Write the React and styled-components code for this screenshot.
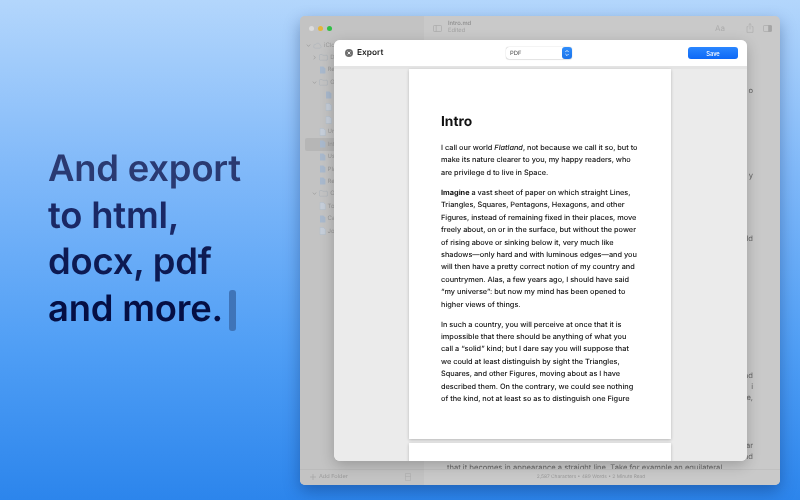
import React from 'react'
import styled, { createGlobalStyle } from 'styled-components'

const Global = createGlobalStyle`
  html, body { margin: 0; padding: 0; }
  body { font-family: Inter, "Liberation Sans", sans-serif; text-rendering: geometricPrecision; }
`

const Page = styled.div`
  width: 800px;
  height: 500px;
  overflow: hidden;
  display: flex;
  filter: blur(0.25px);
  background: linear-gradient(180deg, #b3d6fc 0%, #7fb8f9 35%, #4f9ef5 70%, #2c85ec 100%);
`

const Hero = styled.section`
  width: 300px;
  flex: none;
  box-sizing: border-box;
  padding: 145px 0 0 48px;
`

const HeroLine = styled.div`
  font-size: 36.4px;
  line-height: 46.5px;
  font-weight: 600;
  letter-spacing: -0.2px;
  white-space: nowrap;
  display: flex;
  align-items: center;
  color: ${({ $color }) => $color};
`

const Caret = styled.span`
  display: inline-block;
  width: 7px;
  height: 41px;
  margin: 5px 0 0 6px;
  border-radius: 3px;
  background: #3f74b8;
`

const Win = styled.div`
  position: relative;
  flex: none;
  width: 480px;
  height: 469px;
  margin-top: 16px;
  border-radius: 5px;
  overflow: hidden;
  display: flex;
  background: #c9c9c9;
  box-shadow: 0 6px 16px rgba(0, 30, 80, 0.35);
  color: #777;
`

const Sidebar = styled.aside`
  width: 124px;
  flex: none;
  display: flex;
  flex-direction: column;
  background: #c3c3c3;
`

const Lights = styled.div`
  height: 23px;
  flex: none;
  display: flex;
  align-items: center;
  gap: 4px;
  padding: 1px 0 0 8.5px;
  box-sizing: border-box;
`

const Light = styled.i`
  width: 5px;
  height: 5px;
  border-radius: 50%;
  background: ${({ $c }) => $c};
`

const Tree = styled.div`
  flex: 1;
  display: flex;
  flex-direction: column;
`

const Row = styled.div`
  height: 12.4px;
  flex: none;
  display: flex;
  align-items: center;
  gap: 2px;
  margin: 0 0 0 5px;
  padding-left: ${({ $depth }) => 1 + $depth * 6.3}px;
  border-radius: 2px;
  font-size: 6px;
  color: #999;
  background: ${({ $on }) => ($on ? '#b6b6b6' : 'transparent')};
  white-space: nowrap;
`

const Chev = styled.span`
  width: 5px;
  flex: none;
  display: flex;
`

const SideFoot = styled.div`
  height: 16px;
  flex: none;
  box-sizing: border-box;
  display: flex;
  align-items: center;
  justify-content: space-between;
  padding: 0 13px 1px 10px;
  border-top: 1px solid #bbb;
  font-size: 5.6px;
  color: #9a9a9a;
`

const AddFolder = styled.span`
  display: flex;
  align-items: center;
  gap: 3px;
`

const Main = styled.main`
  flex: 1;
  min-width: 0;
  display: flex;
  flex-direction: column;
`

const Toolbar = styled.header`
  height: 24px;
  flex: none;
  box-sizing: border-box;
  display: flex;
  align-items: center;
  padding: 0 8px 0 9px;
  gap: 6px;
`

const TitleBlock = styled.div`
  flex: 1;
  display: flex;
  flex-direction: column;
  font-size: 5.8px;
  line-height: 6.5px;
  margin-top: -1px;
`

const Title = styled.span`
  font-weight: 500;
  color: #8c8c8c;
`

const Sub = styled.span`
  color: #a2a2a2;
`

const Aa = styled.span`
  font-size: 8px;
  color: #adadad;
  margin-right: 15px;
`

const Tools = styled.div`
  display: flex;
  align-items: center;
  gap: 9px;
`

const Editor = styled.div`
  flex: 1;
  min-height: 0;
  overflow: hidden;
  padding-top: 44.5px;
`

const EditLine = styled.div`
  height: 11px;
  margin-top: ${({ $gap }) => $gap || 0}px;
  font-size: 7.6px;
  line-height: 11px;
  white-space: nowrap;
  color: #666;
  text-align: ${({ $end }) => ($end ? 'right' : 'left')};
  width: ${({ $end }) => ($end ? '329px' : 'auto')};
  padding-left: ${({ $end }) => ($end ? '0' : '23px')};
`

const Status = styled.footer`
  height: 16px;
  flex: none;
  box-sizing: border-box;
  display: flex;
  align-items: center;
  justify-content: center;
  padding: 0 22px 1px 0;
  border-top: 1px solid #c0c0c0;
  font-size: 4.85px;
  color: #999;
  background: #c9c9c9;
`

const Sheet = styled.div`
  position: absolute;
  left: 34px;
  top: 24px;
  width: 413px;
  height: 421px;
  border-radius: 6px;
  overflow: hidden;
  display: flex;
  flex-direction: column;
  background: #ebebeb;
  box-shadow: 0 4px 14px rgba(0, 0, 0, 0.22);
`

const SheetHead = styled.div`
  height: 26px;
  flex: none;
  display: grid;
  grid-template-columns: 1fr auto 1fr;
  align-items: center;
  padding: 0 9px 0 11px;
  background: #fff;
`

const Close = styled.div`
  display: flex;
  align-items: center;
  gap: 4px;
  font-size: 8.3px;
  font-weight: 600;
  color: #222;
`

const Select = styled.div`
  width: 66px;
  height: 12px;
  margin-right: 5px;
  box-sizing: border-box;
  display: flex;
  align-items: center;
  justify-content: space-between;
  padding-left: 4px;
  border-radius: 3px;
  background: #fff;
  box-shadow: 0 0 1px rgba(0, 0, 0, 0.35), 0 0.5px 1px rgba(0, 0, 0, 0.08);
  font-size: 5.8px;
  color: #444;
`

const Stepper = styled.span`
  width: 10px;
  height: 12px;
  border-radius: 3px;
  background: linear-gradient(180deg, #2f8dfb, #1a73ea);
  display: flex;
  align-items: center;
  justify-content: center;
`

const Save = styled.button`
  justify-self: end;
  width: 50px;
  height: 12.5px;
  padding: 0;
  border: 0;
  border-radius: 3px;
  background: linear-gradient(180deg, #2a86ff, #0d68f6);
  color: #fff;
  font-family: inherit;
  font-size: 5.8px;
  font-weight: 500;
`

const Pages = styled.div`
  flex: 1;
  min-height: 0;
  overflow: hidden;
  display: flex;
  flex-direction: column;
  align-items: center;
  gap: 4px;
  padding: 3px 1px 0 0;
  background: linear-gradient(180deg, #e4e4e4 0, #e4e4e4 3px, #ebebeb 3px);
`

const Paper = styled.article`
  width: 262px;
  flex: none;
  height: ${({ $h }) => $h}px;
  box-sizing: border-box;
  overflow: hidden;
  padding: 45px 0 0 32px;
  background: #fff;
  box-shadow: 0 1px 3px rgba(0, 0, 0, 0.22);
  color: #111;
`

const H1 = styled.h1`
  margin: 0 0 12px;
  font-size: 13.8px;
  line-height: 16px;
  font-weight: 700;
  color: #111;
`

const Para = styled.p`
  margin: 0 0 7.7px;
  font-size: 7.34px;
  font-weight: 500;
  line-height: 12.4px;
  white-space: pre;
`

const paras = {
  third: `In such a country, you will perceive at once that it is
impossible that there should be anything of what you
call a “solid” kind; but I dare say you will suppose that
we could at least distinguish by sight the Triangles,
Squares, and other Figures, moving about as I have
described them. On the contrary, we could see nothing
of the kind, not at least so as to distinguish one Figure`,
  second: ` a vast sheet of paper on which straight Lines,
Triangles, Squares, Pentagons, Hexagons, and other
Figures, instead of remaining fixed in their places, move
freely about, on or in the surface, but without the power
of rising above or sinking below it, very much like
shadows—only hard and with luminous edges—and you
will then have a pretty correct notion of my country and
countrymen. Alas, a few years ago, I should have said
“my universe”: but now my mind has been opened to
higher views of things.`,
}

// rows of the blurred file tree: [depth, kind, open, label, selected, pale]
const tree = [
  [0, 'cloud', 'down', 'iCloud'],
  [1, 'folder', 'right', 'Drafts'],
  [2, 'doc', null, 'Read'],
  [1, 'folder', 'down', 'Geometry'],
  [3, 'doc', null, 'Lines'],
  [3, 'doc', null, 'Points', false, true],
  [3, 'doc', null, 'Solids', false, true],
  [2, 'doc', null, 'Untitled', false, true],
  [2, 'doc', null, 'Intro', true],
  [2, 'doc', null, 'Use'],
  [2, 'doc', null, 'Plans'],
  [2, 'doc', null, 'Rest'],
  [1, 'folder', 'down', 'Other'],
  [2, 'doc', null, 'To do', false, true],
  [2, 'doc', null, 'Call'],
  [2, 'doc', null, 'Jot', false, true],
]

// editor text behind the sheet, only the line ends show past its right edge
const lineEnds = [
  ['o', 0],
  ['y', 74],
  ['ld', 52],
  ['nd', 126],
  ['i', 0],
  ['e,', 0],
  ['ar', 37],
  ['nd', 0],
]

const Icon = ({ kind, pale }) => {
  if (kind === 'cloud') {
    return (
      <svg width="9" height="7" viewBox="0 0 9 7" fill="none" stroke="#b0b5bc" strokeWidth="0.6">
        <path d="M2.2 6.2h4.6a1.6 1.6 0 0 0 .3-3.1A2.3 2.3 0 0 0 2.8 2.4 1.9 1.9 0 0 0 2.2 6.2z" />
      </svg>
    )
  }
  if (kind === 'folder') {
    return (
      <svg width="9" height="7" viewBox="0 0 9 7" fill="none" stroke="#adb3ba" strokeWidth="0.6">
        <path d="M0.5 1.2c0-.4.2-.7.6-.7h2l.7.8h4c.4 0 .7.3.7.7v3.5c0 .4-.3.7-.7.7H1.2c-.4 0-.7-.3-.7-.7z" />
      </svg>
    )
  }
  return (
    <svg width="7" height="8" viewBox="0 0 7 8">
      <path
        d="M1 0.4h3.4L6.4 2.4v5.2H1z"
        fill={pale ? '#c6ced9' : '#a9b9cd'}
        stroke={pale ? '#b0bccb' : 'none'}
        strokeWidth="0.5"
      />
    </svg>
  )
}

const Chevron = ({ dir }) => (
  <svg width="5" height="5" viewBox="0 0 5 5" fill="none" stroke="#a0a0a0" strokeWidth="0.8">
    <path d={dir === 'down' ? 'M0.8 1.6l1.7 1.8 1.7-1.8' : 'M1.6 0.8l1.8 1.7-1.8 1.7'} />
  </svg>
)

const App = () => (
  <Page>
    <Global />
    <Hero>
      <HeroLine $color="#2a3a72">And export</HeroLine>
      <HeroLine $color="#1a2865">to html,</HeroLine>
      <HeroLine $color="#0d1a52">docx, pdf</HeroLine>
      <HeroLine $color="#050f44">and more.<Caret /></HeroLine>
    </Hero>
    <Win>
      <Sidebar>
        <Lights>
          <Light $c="#dcdcdc" />
          <Light $c="#e3b43c" />
          <Light $c="#2fbf45" />
        </Lights>
        <Tree>
          {tree.map(([depth, kind, open, label, on, pale]) => (
            <Row key={label} $depth={depth} $on={on}>
              {open && <Chev><Chevron dir={open} /></Chev>}
              <Icon kind={kind} pale={pale} />
              {label}
            </Row>
          ))}
        </Tree>
        <SideFoot>
          <AddFolder>
            <svg width="6" height="6" viewBox="0 0 6 6" stroke="#a5a5a5" strokeWidth="0.7">
              <path d="M3 0v6M0 3h6" />
            </svg>
            Add Folder
          </AddFolder>
          <svg width="6" height="8" viewBox="0 0 6 8" fill="none" stroke="#adadad" strokeWidth="0.6">
            <path d="M0.5 0.5h5v7h-5zM0.5 3.5h5" />
          </svg>
        </SideFoot>
      </Sidebar>
      <Main>
        <Toolbar>
          <svg width="9" height="7" viewBox="0 0 9 7" fill="none" stroke="#a5a5a5" strokeWidth="0.6">
            <rect x="0.5" y="0.5" width="8" height="6" rx="0.8" />
            <path d="M3.2 0.5v6" />
          </svg>
          <TitleBlock>
            <Title>Intro.md</Title>
            <Sub>Edited</Sub>
          </TitleBlock>
          <Aa>Aa</Aa>
          <Tools>
            <svg width="8" height="10" viewBox="0 0 8 10" fill="none" stroke="#adadad" strokeWidth="0.7">
              <path d="M2.4 3.6H1v5.8h6V3.6H5.6M4 6.4V0.6M2.5 2L4 0.6 5.5 2" />
            </svg>
            <svg width="9" height="7" viewBox="0 0 9 7" fill="none" stroke="#a5a5a5" strokeWidth="0.6">
              <rect x="0.5" y="0.5" width="8" height="6" rx="0.8" />
              <path d="M5.5 0.5h2.2c.4 0 .8.4.8.8v4.4c0 .4-.4.8-.8.8H5.5z" fill="#a5a5a5" />
            </svg>
          </Tools>
        </Toolbar>
        <Editor>
          {lineEnds.map(([text, gap], i) => (
            <EditLine key={i} $end $gap={gap}>{text}</EditLine>
          ))}
          <EditLine>that it becomes in appearance a straight line. Take for example an equilateral</EditLine>
        </Editor>
        <Status>2,587 Characters • 489 Words • 2 Minute Read</Status>
      </Main>
      <Sheet>
        <SheetHead>
          <Close>
            <svg width="8" height="8" viewBox="0 0 8 8">
              <circle cx="4" cy="4" r="4" fill="#6f6f6f" />
              <path d="M2.6 2.6l2.8 2.8M5.4 2.6L2.6 5.4" stroke="#fff" strokeWidth="0.9" />
            </svg>
            Export
          </Close>
          <Select>
            PDF
            <Stepper>
              <svg width="6" height="8" viewBox="0 0 6 8" fill="none" stroke="#fff" strokeWidth="0.8">
                <path d="M1.4 3L3 1.4 4.6 3M1.4 5L3 6.6 4.6 5" />
              </svg>
            </Stepper>
          </Select>
          <Save>Save</Save>
        </SheetHead>
        <Pages>
          <Paper $h={370}>
            <H1>Intro</H1>
            <Para>
              I call our world <em>Flatland</em>, not because we call it so, but to{'\n'}
              make its nature clearer to you, my happy readers, who{'\n'}
              are privilege d to live in Space.
            </Para>
            <Para><strong>Imagine</strong>{paras.second}</Para>
            <Para>{paras.third}</Para>
          </Paper>
          <Paper $h={40} />
        </Pages>
      </Sheet>
    </Win>
  </Page>
)

export default App
